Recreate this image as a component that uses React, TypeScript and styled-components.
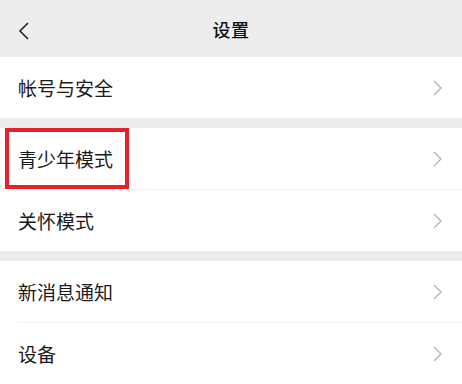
import React from 'react'
import styled, { createGlobalStyle } from 'styled-components'

const GlobalStyle = createGlobalStyle`
    html, body {
        margin: 0;
        padding: 0;
        background: #ededed;
    }
    body {
        font-family: "Noto Sans CJK SC", "Noto Sans", sans-serif;
        color: #191919;
    }
`

const Page = styled.div`
    width: 462px;
    height: 384px;
    overflow: hidden;
    background: #ededed;
`

const Header = styled.div`
    height: 57px;
    display: flex;
    align-items: center;
    justify-content: center;
    position: relative;
    background: #ededed;
`

const BackButton = styled.div`
    position: absolute;
    left: 18px;
    top: 22px;
    width: 12px;
    height: 18px;
    display: flex;
`

const Title = styled.div`
    font-size: 18px;
    font-weight: 500;
    letter-spacing: 0.5px;
    color: #111;
`

const Group = styled.div`
    background: #fff;
    margin-bottom: 10px;
`

const Row = styled.div`
    height: 61px;
    display: flex;
    align-items: center;
    justify-content: space-between;
    padding: 0 20px 0 18px;
    position: relative;
`

const Label = styled.div`
    font-size: 19px;
    line-height: 1;
    color: #1a1a1a;
`

const Divider = styled.div`
    height: 1px;
    margin-left: 18px;
    background: #efefef;
`

const Highlight = styled.div`
    position: absolute;
    left: 5px;
    top: 0;
    width: 124px;
    height: 61px;
    box-sizing: border-box;
    border: 4px solid #e3222b;
`

const Chevron = () => (
    <svg width="9" height="16" viewBox="0 0 9 16">
        <polyline points="1,1 8,8 1,15" fill="none" stroke="#b2b2b2" strokeWidth="1.3" />
    </svg>
)

type Item = { label: string, marked?: boolean }

const groups: Item[][] = [
    [{ label: '帐号与安全' }],
    [{ label: '青少年模式', marked: true }, { label: '关怀模式' }],
    [{ label: '新消息通知' }, { label: '设备' }],
]

const App = () => {
    return (
        <Page>
            <GlobalStyle />
            <Header>
                <BackButton>
                    <svg width="12" height="18" viewBox="0 0 12 18">
                        <polyline points="10,1 2,9 10,17" fill="none" stroke="#1a1a1a" strokeWidth="1.5" />
                    </svg>
                </BackButton>
                <Title>设置</Title>
            </Header>
            {groups.map((items, gi) => (
                <Group key={gi}>
                    {items.map((item, idx) => (
                        <React.Fragment key={item.label}>
                            {idx > 0 && <Divider />}
                            <Row>
                                <Label>{item.label}</Label>
                                <Chevron />
                                {item.marked && <Highlight />}
                            </Row>
                        </React.Fragment>
                    ))}
                </Group>
            ))}
        </Page>
    )
}

export default App
